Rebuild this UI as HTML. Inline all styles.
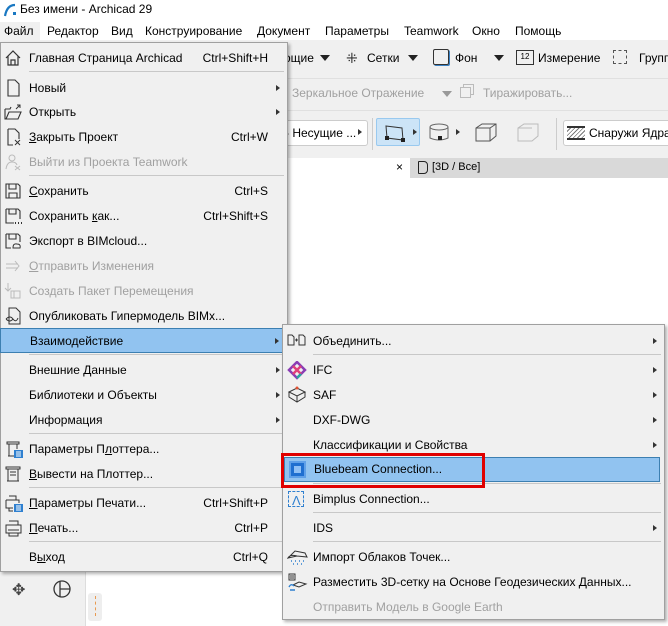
<!DOCTYPE html>
<html><head><meta charset="utf-8"><style>
*{margin:0;padding:0;box-sizing:border-box}
body{width:668px;height:626px;position:relative;overflow:hidden;background:#fff;font-family:"Liberation Sans","Noto Sans CJK SC",sans-serif;font-size:12px;color:#000}
.a{position:absolute;white-space:nowrap}
.menu{position:absolute;background:#f0f0f0;border:1px solid #a0a0a0;box-shadow:2px 2px 3px rgba(0,0,0,.3)}
.it{position:absolute;left:0;right:0;height:24px;line-height:24px}
.it .t{position:absolute;left:28px}
.it .k{position:absolute;right:19px}
.it .ar{position:absolute;right:7px;top:9px;width:0;height:0;border-left:4px solid #333;border-top:3.5px solid transparent;border-bottom:3.5px solid transparent}
.dis{color:#a0a0a0}
.sep{position:absolute;left:28px;right:3px;height:1px;background:#c8c8c8}
.hl{background:#91c3f0;border:1px solid #3c7fb1}
.ic{position:absolute;left:3px;top:3px}
u{text-decoration:underline}
</style></head><body>
<!-- title -->
<svg class="a" style="left:3px;top:3px" width="14" height="14"><path d="M2 13 Q4 2 12 2" stroke="#1a78c2" stroke-width="2.2" fill="none"/><rect x="10" y="9" width="3" height="3" fill="#1a78c2"/></svg>
<div class="a" style="left:20px;top:2px;font-size:12px">Без имени - Archicad 29</div>
<!-- menubar -->
<div class="a" style="left:0;top:20px;width:668px;height:20px;background:#fff"></div>
<div class="a" style="left:0;top:22px;width:40px;height:18px;background:#f0f0f0"></div>
<div class="a" style="left:4px;top:24px">Файл</div>
<div class="a" style="left:47px;top:24px">Редактор</div>
<div class="a" style="left:111px;top:24px">Вид</div>
<div class="a" style="left:145px;top:24px">Конструирование</div>
<div class="a" style="left:257px;top:24px">Документ</div>
<div class="a" style="left:325px;top:24px">Параметры</div>
<div class="a" style="left:404px;top:24px">Teamwork</div>
<div class="a" style="left:472px;top:24px">Окно</div>
<div class="a" style="left:515px;top:24px">Помощь</div>
<!-- toolbars -->
<div class="a" style="left:0;top:40px;width:668px;height:118px;background:#f0f0f0"></div>
<div class="a" style="left:0;top:78px;width:668px;height:1px;background:#e0e0e0"></div>
<div class="a" style="left:0;top:110px;width:668px;height:1px;background:#e0e0e0"></div>
<div class="a" style="left:284px;top:51px">ощие</div>
<div class="a" style="left:320px;top:55px;border-top:6px solid #222;border-left:5px solid transparent;border-right:5px solid transparent"></div>
<div class="a" style="left:346px;top:50px;font-size:14px;color:#333">⁜</div>
<div class="a" style="left:367px;top:51px">Сетки</div>
<div class="a" style="left:408px;top:55px;border-top:6px solid #222;border-left:5px solid transparent;border-right:5px solid transparent"></div>
<div class="a" style="left:433px;top:49px;width:16px;height:16px;border:1.5px solid #333;border-radius:2px;box-shadow:1px 1px 0 #3b82c4"></div>
<div class="a" style="left:455px;top:51px">Фон</div>
<div class="a" style="left:494px;top:55px;border-top:6px solid #222;border-left:5px solid transparent;border-right:5px solid transparent"></div>
<div class="a" style="left:516px;top:50px;width:18px;height:15px;border:1.3px solid #333;font-size:8px;line-height:11px;text-align:center">12</div>
<div class="a" style="left:538px;top:51px">Измерение</div>
<div class="a" style="left:613px;top:50px;width:14px;height:14px;border:1px dashed #555"></div>
<div class="a" style="left:639px;top:51px">Групп</div>
<div class="a dis" style="left:292px;top:86px">Зеркальное Отражение</div>
<div class="a" style="left:442px;top:91px;border-top:6px solid #999;border-left:5px solid transparent;border-right:5px solid transparent"></div>
<div class="a" style="left:460px;top:87px;width:11px;height:11px;border:1px solid #bbb;box-shadow:3px -3px 0 -1px #f0f0f0,3px -3px 0 0 #bbb"></div>
<div class="a dis" style="left:483px;top:86px">Тиражировать...</div>
<div class="a" style="left:282px;top:120px;width:86px;height:26px;background:#fff;border:1px solid #ccc;border-radius:3px"></div>
<div class="a" style="left:285px;top:126px">- Несущие ...</div>
<div class="a" style="left:358px;top:129px;border-left:4px solid #333;border-top:3.5px solid transparent;border-bottom:3.5px solid transparent"></div>
<div class="a" style="left:372px;top:118px;width:1px;height:32px;background:#ccc"></div>
<div class="a" style="left:376px;top:118px;width:44px;height:28px;background:#cce4f7;border:1px solid #99c9ef;border-radius:2px"></div>
<svg class="a" style="left:384px;top:124px" width="26" height="18"><path d="M2 2 L18 4 L19 16 L3 14 Z" fill="none" stroke="#333"/><rect x="1" y="12" width="4" height="4" fill="#222"/><rect x="17" y="14" width="4" height="4" fill="#222"/></svg>
<div class="a" style="left:413px;top:129px;border-left:4px solid #333;border-top:3.5px solid transparent;border-bottom:3.5px solid transparent"></div>
<svg class="a" style="left:428px;top:122px" width="22" height="22"><ellipse cx="11" cy="5" rx="9" ry="3" fill="none" stroke="#666"/><path d="M2 5 V16 Q11 20 20 16 V5" fill="none" stroke="#666"/><rect x="10" y="14" width="4" height="4" fill="#222"/></svg>
<div class="a" style="left:456px;top:129px;border-left:4px solid #333;border-top:3.5px solid transparent;border-bottom:3.5px solid transparent"></div>
<svg class="a" style="left:474px;top:122px" width="24" height="22"><path d="M2 6 L8 2 L22 2 L22 14 L16 19 L2 19 Z M2 6 L16 6 L22 2 M16 6 V19" fill="none" stroke="#555"/></svg>
<svg class="a" style="left:516px;top:122px" width="26" height="22"><path d="M2 6 L8 2 L22 2 L22 14 L16 19 L2 19 Z M2 6 L16 6" fill="none" stroke="#bbb"/></svg>
<div class="a" style="left:556px;top:118px;width:1px;height:32px;background:#ccc"></div>
<div class="a" style="left:563px;top:120px;width:110px;height:26px;background:#fff;border:1px solid #ccc;border-radius:3px"></div>
<div class="a" style="left:567px;top:126px;width:18px;height:14px;border-top:2px solid #333;border-bottom:2px solid #333;background:repeating-linear-gradient(135deg,#fff 0 2px,#777 2px 3px)"></div>
<div class="a" style="left:589px;top:126px">Снаружи Ядра</div>
<!-- tab bar -->
<div class="a" style="left:86px;top:158px;width:582px;height:20px;background:#fff"></div>
<div class="a" style="left:410px;top:158px;width:258px;height:20px;background:#d9d9d9"></div>
<div class="a" style="left:396px;top:160px;font-size:12px">×</div>
<div class="a" style="left:418px;top:161px;width:10px;height:13px;border:1.3px solid #222;border-radius:1px 4px 4px 1px"></div>
<div class="a" style="left:432px;top:161px;font-size:11px">[3D / Все]</div>
<!-- left toolbar -->
<div class="a" style="left:0;top:178px;width:86px;height:448px;background:#f0f0f0;border-right:1px solid #ddd"></div>
<div class="a" style="left:12px;top:580px;font-size:16px;color:#444">✥</div>
<svg class="a" style="left:52px;top:579px" width="20" height="20"><circle cx="10" cy="10" r="8" fill="none" stroke="#333" stroke-width="1.3"/><path d="M8 2 V18 M8 10 H18" stroke="#333" stroke-width="1.3"/></svg>
<div class="a" style="left:88px;top:593px;width:14px;height:28px;background:#eee;border-radius:3px"></div>
<div class="a" style="left:95px;top:596px;width:1px;height:20px;border-left:1px dashed #e89a50"></div>

<!-- FILE MENU -->
<div class="menu" style="left:0;top:42px;width:288px;height:530px">
 <div class="it" style="top:3px"><svg class="ic" width="18" height="18"><path d="M2 9 L9 2 L16 9 M4 7 V16 H14 V7 M7 16 V11 H11 V16" fill="none" stroke="#333" stroke-width="1.2"/></svg><span class="t">Главная Страница Archicad</span><span class="k">Ctrl+Shift+H</span></div>
 <div class="sep" style="top:28px"></div>
 <div class="it" style="top:33px"><svg class="ic" width="18" height="18"><path d="M4 1 H11 L15 5 V17 H4 Z" fill="none" stroke="#333" stroke-width="1.1"/></svg><span class="t">Новый</span><span class="ar"></span></div>
 <div class="it" style="top:57px"><svg class="ic" width="18" height="18"><path d="M1 6 V16 H14 L17 9 H5 L2 16 M1 6 H6 L7 4" fill="none" stroke="#333" stroke-width="1.1"/><path d="M12 6 L16 2 M13 2 H16 V5" stroke="#333" fill="none"/></svg><span class="t">Открыть</span><span class="ar"></span></div>
 <div class="it" style="top:82px"><svg class="ic" width="18" height="18"><path d="M4 1 H11 L15 5 V11 M9 17 H4 V1" fill="none" stroke="#333" stroke-width="1.1"/><path d="M11 12 L16 17 M16 12 L11 17" stroke="#333"/></svg><span class="t"><u>З</u>акрыть Проект</span><span class="k">Ctrl+W</span></div>
 <div class="it dis" style="top:107px"><svg class="ic" width="18" height="18"><circle cx="8" cy="5" r="3" fill="none" stroke="#bbb"/><path d="M2 16 Q3 9 8 9 Q12 9 13 12 M11 13 L16 17 M16 13 L11 17" stroke="#bbb" fill="none"/></svg><span class="t">Выйти из Проекта Teamwork</span></div>
 <div class="sep" style="top:132px"></div>
 <div class="it" style="top:136px"><svg class="ic" width="18" height="18"><path d="M2 2 H14 L16 4 V16 H2 Z M5 2 V7 H12 V2 M5 16 V11 H13 V16" fill="none" stroke="#333" stroke-width="1.1"/></svg><span class="t"><u>С</u>охранить</span><span class="k">Ctrl+S</span></div>
 <div class="it" style="top:161px"><svg class="ic" width="18" height="18"><path d="M2 2 H14 L16 4 V12 M10 16 H2 V2 M5 2 V7 H12 V2" fill="none" stroke="#333" stroke-width="1.1"/><path d="M11 16 h1 M14 16 h1 M17 16 h1" stroke="#333" stroke-width="2"/></svg><span class="t">Сохранить <u>к</u>ак...</span><span class="k">Ctrl+Shift+S</span></div>
 <div class="it" style="top:186px"><svg class="ic" width="18" height="18"><path d="M2 2 H14 L16 4 V10 M7 16 H2 V2 M5 2 V7 H12 V2" fill="none" stroke="#333" stroke-width="1.1"/><path d="M9 16 Q9 11 13 12 Q17 12 16 16 Z" fill="none" stroke="#333"/></svg><span class="t">Экспорт в BIMcloud...</span></div>
 <div class="it dis" style="top:211px"><svg class="ic" width="18" height="18"><path d="M2 7 H14 M2 11 H14 M11 4 L15 9 L11 14" stroke="#bbb" fill="none"/></svg><span class="t"><u>О</u>тправить Изменения</span></div>
 <div class="it dis" style="top:236px"><svg class="ic" width="18" height="18"><path d="M4 1 V9 M1 6 L4 9 L7 6 M7 9 H16 V16 H7 Z M10 9 V16" stroke="#bbb" fill="none"/></svg><span class="t">Создать Пакет Перемещения</span></div>
 <div class="it" style="top:261px"><svg class="ic" width="18" height="18"><path d="M5 1 H12 L16 5 V17 H5 Z" fill="none" stroke="#333"/><path d="M2 12 Q6 8 9 12 Q12 16 14 11 M2 12 Q6 16 9 12" stroke="#333" fill="none"/></svg><span class="t">Опубликовать Гипермодель BIMx...</span></div>
 <div class="it hl" style="top:285px;left:-1px;right:0;height:25px"><span class="t" style="left:29px">Взаимодействие</span><span class="ar"></span></div>
 <div class="sep" style="top:311px"></div>
 <div class="it" style="top:315px"><span class="t">Внешние Данные</span><span class="ar"></span></div>
 <div class="it" style="top:340px"><span class="t">Библиотеки и Объекты</span><span class="ar"></span></div>
 <div class="it" style="top:365px"><span class="t">Информация</span><span class="ar"></span></div>
 <div class="sep" style="top:390px"></div>
 <div class="it" style="top:394px"><svg class="ic" width="20" height="20"><path d="M3 2 H15 V4 H3 Z M5 4 V16 H9 M4 16 H10 M13 4 V9" stroke="#333" fill="none"/><rect x="10" y="10" width="9" height="8" fill="#2f80d0"/><path d="M12 12 H17 M12 14 H17 M12 16 H17" stroke="#fff"/></svg><span class="t">Параметры П<u>л</u>оттера...</span></div>
 <div class="it" style="top:419px"><svg class="ic" width="20" height="20"><path d="M2 2 H16 V4 H2 Z M4 4 V16 H14 V4 M3 16 H15 M6 7 H12 M6 10 H12" stroke="#333" fill="none"/></svg><span class="t"><u>В</u>ывести на Плоттер...</span></div>
 <div class="sep" style="top:444px"></div>
 <div class="it" style="top:448px"><svg class="ic" width="20" height="20"><path d="M5 2 H12 V6 M2 6 H15 V9 M2 6 V14 H9 M5 14 V17 H9" stroke="#333" fill="none"/><rect x="10" y="10" width="9" height="8" fill="#2f80d0"/><path d="M12 12 H17 M12 14 H17 M12 16 H17" stroke="#fff"/></svg><span class="t"><u>П</u>араметры Печати...</span><span class="k">Ctrl+Shift+P</span></div>
 <div class="it" style="top:473px"><svg class="ic" width="20" height="20"><path d="M5 2 H14 V6 M2 6 H17 V14 H2 Z M5 14 V17 H14 V14 M4 11 H15" stroke="#333" fill="none"/></svg><span class="t"><u>П</u>ечать...</span><span class="k">Ctrl+P</span></div>
 <div class="sep" style="top:498px"></div>
 <div class="it" style="top:502px"><span class="t">В<u>ы</u>ход</span><span class="k">Ctrl+Q</span></div>
</div>

<!-- SUBMENU -->
<div class="menu" style="left:282px;top:324px;width:383px;height:296px">
 <div class="it" style="top:4px"><svg class="ic" width="20" height="18" style="left:4px"><path d="M1 3 H5 L7 5 V13 H1 Z M12 3 H16 L18 5 V13 H12 Z M8 8 H11 M9.5 6.5 V9.5" stroke="#333" fill="none"/></svg><span class="t" style="left:30px">Объединить...</span><span class="ar"></span></div>
 <div class="sep" style="top:29px;left:30px"></div>
 <div class="it" style="top:33px"><svg class="ic" width="20" height="20" style="left:4px"><path d="M10 1 L18 9 L10 17 L2 9 Z" fill="none" stroke="#8a3db5" stroke-width="2.5"/><path d="M6 5 L14 13 M14 5 L6 13" stroke="#e0407a" stroke-width="2.5"/><path d="M10 17 L14 13" stroke="#29a7a0" stroke-width="2.5"/></svg><span class="t" style="left:30px">IFC</span><span class="ar"></span></div>
 <div class="it" style="top:58px"><svg class="ic" width="20" height="20" style="left:4px"><path d="M2 6 L10 2 L18 6 L10 10 Z M2 6 V11 L10 16 L18 11 V6 M10 10 V16" stroke="#333" fill="none"/><circle cx="10" cy="2" r="1.5" fill="#e05030"/></svg><span class="t" style="left:30px">SAF</span><span class="ar"></span></div>
 <div class="it" style="top:83px"><span class="t" style="left:30px">DXF-DWG</span><span class="ar"></span></div>
 <div class="it" style="top:108px"><span class="t" style="left:30px">Классификации и Свойства</span><span class="ar"></span></div>
 <div class="it hl" style="top:132px;left:1px;right:4px;height:25px"><div class="a" style="left:4px;top:3px;width:17px;height:17px;background:#1f6fd0;border:2px solid #5fa0e8"></div><div class="a" style="left:9px;top:8px;width:7px;height:7px;background:#8fc0f5"></div><span class="t" style="left:29px;line-height:23px">Bluebeam Connection...</span></div>
 <div class="sep" style="top:158px;left:30px"></div>
 <div class="it" style="top:162px"><div class="a" style="left:5px;top:4px;width:16px;height:16px;border:1.5px dashed #2f80d0"></div><div class="a" style="left:9px;top:2px;color:#2f80d0;font-size:13px">Λ</div><span class="t" style="left:30px">Bimplus Connection...</span></div>
 <div class="sep" style="top:187px;left:30px"></div>
 <div class="it" style="top:191px"><span class="t" style="left:30px">IDS</span><span class="ar"></span></div>
 <div class="sep" style="top:216px;left:30px"></div>
 <div class="it" style="top:220px"><svg class="ic" width="22" height="20" style="left:4px"><path d="M1 10 L8 3 L18 5 L20 9 L10 8 Z M1 10 Q3 6 10 8" stroke="#333" fill="none"/><path d="M4 13 h1 M8 13 h1 M12 13 h1 M16 13 h1 M6 16 h1 M10 16 h1 M14 16 h1" stroke="#2f80d0" stroke-width="1.5"/></svg><span class="t" style="left:30px">Импорт Облаков Точек...</span></div>
 <div class="it" style="top:245px"><svg class="ic" width="22" height="20" style="left:4px"><path d="M2 1 H8 V7 H2 Z M3 3 H7 M3 5 H7 M6 12 L12 9 L19 11 L12 14 Z" stroke="#333" fill="none"/><path d="M2 14 Q4 10 7 13 M3 17 H8" stroke="#2f80d0" fill="none" stroke-width="1.4"/></svg><span class="t" style="left:30px">Разместить 3D-сетку на Основе Геодезических Данных...</span></div>
 <div class="it dis" style="top:270px"><span class="t" style="left:30px">Отправить Модель в Google Earth</span></div>
</div>
<div class="a" style="left:281px;top:453px;width:204px;height:35px;border:3px solid #e00000"></div>
</body></html>
